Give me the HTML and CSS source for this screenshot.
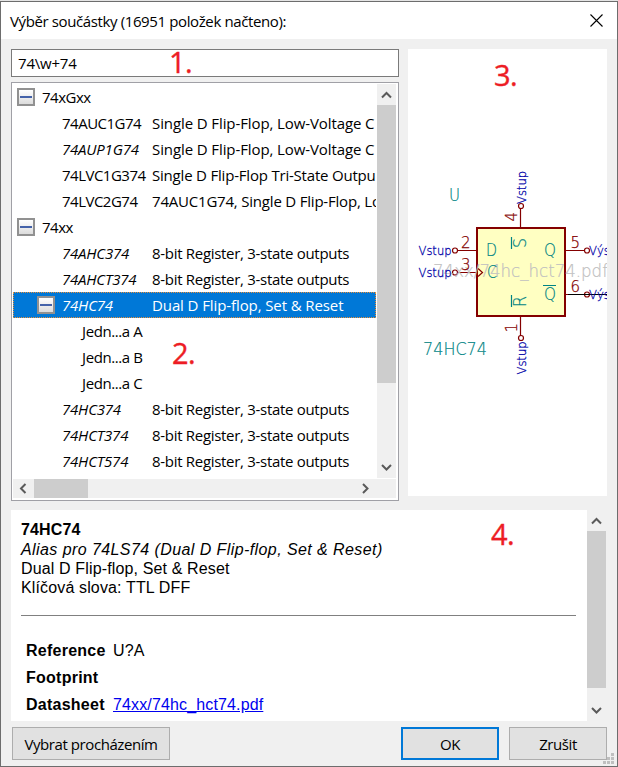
FILE: index.html
```html
<!DOCTYPE html>
<html lang="cs">
<head>
<meta charset="utf-8">
<title>Výběr součástky</title>
<link rel="stylesheet" href="styles.css">
</head>
<body>
<div class="window">
  <header class="titlebar">
    <span class="title">Výběr součástky (16951 položek načteno):</span>
    <svg class="close" width="13" height="13" viewBox="0 0 13 13"><path d="M.5 .5l12 12M12.5 .5l-12 12"/></svg>
  </header>
  <main class="content">
    <div class="upper">
      <div class="left">
        <div class="search">74\w+74</div>
        <div class="tree">
          <div class="tree-main">
            <div class="rows">
              <div class="row group"><i class="toggle"></i><span>74xGxx</span></div>
              <div class="row part"><span class="name">74AUC1G74</span><span class="desc loose">Single D Flip-Flop, Low-Voltage C</span></div>
              <div class="row part alias"><span class="name">74AUP1G74</span><span class="desc loose">Single D Flip-Flop, Low-Voltage C</span></div>
              <div class="row part"><span class="name">74LVC1G374</span><span class="desc medium">Single D Flip-Flop Tri-State Outpu</span></div>
              <div class="row part"><span class="name">74LVC2G74</span><span class="desc medium">74AUC1G74, Single D Flip-Flop, Lo</span></div>
              <div class="row group"><i class="toggle"></i><span>74xx</span></div>
              <div class="row part alias"><span class="name">74AHC374</span><span class="desc">8-bit Register, 3-state outputs</span></div>
              <div class="row part alias"><span class="name">74AHCT374</span><span class="desc">8-bit Register, 3-state outputs</span></div>
              <div class="row part alias selected"><i class="toggle"></i><span class="name">74HC74</span><span class="desc loose">Dual D Flip-flop, Set &amp; Reset</span></div>
              <div class="row unit">Jedn...a A</div>
              <div class="row unit">Jedn...a B</div>
              <div class="row unit">Jedn...a C</div>
              <div class="row part alias"><span class="name">74HC374</span><span class="desc">8-bit Register, 3-state outputs</span></div>
              <div class="row part alias"><span class="name">74HCT374</span><span class="desc">8-bit Register, 3-state outputs</span></div>
              <div class="row part alias"><span class="name">74HCT574</span><span class="desc">8-bit Register, 3-state outputs</span></div>
            </div>
            <div class="vscroll">
              <svg class="arrow" width="19" height="21"><path d="M5 13.5l4.5-4.5 4.5 4.5"/></svg>
              <div class="thumb tree-thumb"></div>
              <svg class="arrow last" width="19" height="21"><path d="M5 8l4.5 4.5L14 8"/></svg>
            </div>
          </div>
          <div class="hscroll">
            <svg class="arrow" width="21" height="19"><path d="M12.5 5L8 9.500l4.500 4.500"/></svg>
            <div class="hthumb"></div>
            <svg class="arrow right" width="21" height="19"><path d="M8 5l4.500 4.500L8 14"/></svg>
          </div>
        </div>
      </div>
      <div class="preview">
        <svg width="199" height="447" viewBox="408 49 199 447">
          <rect class="body" x="477" y="228" width="88" height="88"/>
          <g class="pin">
            <path d="M457 250.500H476M457 272.500H476M566 250.500H585M566 294.500H585M520.500 208V227M520.500 317V336M478 268.500l4.500 4-4.500 4"/>
            <circle cx="455" cy="250.500" r="2.500"/><circle cx="455" cy="272.500" r="2.500"/>
            <circle cx="587" cy="250.500" r="2.500"/><circle cx="587" cy="294.500" r="2.500"/>
            <circle cx="521" cy="206" r="2.500"/><circle cx="521" cy="338" r="2.500"/>
          </g>
          <path class="wire" d="M568 294.500H607"/>
          <g class="faint"><text x="433" y="277" textLength="175" lengthAdjust="spacingAndGlyphs">74xx/74hc_hct74.pdf</text></g>
          <g class="num">
            <text x="461" y="248">2</text><text x="461" y="270">3</text>
            <text x="570.500" y="248">5</text><text x="570.500" y="292">6</text>
            <text transform="translate(517 221.500) rotate(-90)">4</text>
            <text transform="translate(517 332.500) rotate(-90)">1</text>
          </g>
          <g class="teal">
            <text x="486" y="256" textLength="11" lengthAdjust="spacingAndGlyphs">D</text>
            <text x="487" y="278" textLength="10" lengthAdjust="spacingAndGlyphs">C</text>
            <text x="544" y="256" textLength="12" lengthAdjust="spacingAndGlyphs">Q</text>
            <text x="544" y="300" textLength="12" lengthAdjust="spacingAndGlyphs">Q</text>
            <text transform="translate(526 248) rotate(-90)" textLength="10" lengthAdjust="spacingAndGlyphs">S</text>
            <text transform="translate(526 307) rotate(-90)" textLength="11" lengthAdjust="spacingAndGlyphs">R</text>
            <text x="449" y="201" textLength="11" lengthAdjust="spacingAndGlyphs">U</text>
            <text x="423" y="355" textLength="64" lengthAdjust="spacingAndGlyphs">74HC74</text>
            <path d="M511.500 237V249M511.500 295V307M543 285.500H556"/>
          </g>
          <g class="label">
            <text x="418.500" y="255" textLength="33" lengthAdjust="spacingAndGlyphs">Vstup</text>
            <text x="418.500" y="277" textLength="33" lengthAdjust="spacingAndGlyphs">Vstup</text>
            <text x="589" y="255" textLength="40" lengthAdjust="spacingAndGlyphs">Výstup</text>
            <text x="589" y="299" textLength="40" lengthAdjust="spacingAndGlyphs">Výstup</text>
            <text transform="translate(525.500 204) rotate(-90)" textLength="33" lengthAdjust="spacingAndGlyphs">Vstup</text>
            <text transform="translate(525.500 374.500) rotate(-90)" textLength="33" lengthAdjust="spacingAndGlyphs">Vstup</text>
          </g>
        </svg>
      </div>
    </div>
    <div class="details">
      <div class="info">
        <div class="info-name">74HC74</div>
        <div class="info-alias">Alias pro 74LS74 (Dual D Flip-flop, Set &amp; Reset)</div>
        <div class="info-desc">Dual D Flip-flop, Set &amp; Reset</div>
        <div class="info-keys">Klíčová slova: TTL DFF</div>
        <hr>
        <dl class="fields">
          <dt>Reference</dt><dd>U?A</dd>
          <dt>Footprint</dt><dd></dd>
          <dt>Datasheet</dt><dd><a href="#">74xx/74hc_hct74.pdf</a></dd>
        </dl>
      </div>
      <div class="vscroll">
        <svg class="arrow" width="19" height="21"><path d="M5 13.500l4.500-4.500 4.500 4.500"/></svg>
        <div class="thumb info-thumb"></div>
        <svg class="arrow last" width="19" height="21"><path d="M5 8l4.500 4.500L14 8"/></svg>
      </div>
    </div>
    <footer class="buttons">
      <button class="browse">Vybrat procházením</button>
      <button class="ok">OK</button>
      <button class="cancel">Zrušit</button>
    </footer>
  </main>
  <svg class="grip" width="11" height="11"><path d="M8 0h3v3H8zM4 4h3v3H4zM8 4h3v3H8zM0 8h3v3H0zM4 8h3v3H4zM8 8h3v3H8z"/></svg>
  <span class="mark mark1">1.</span>
  <span class="mark mark2">2.</span>
  <span class="mark mark3">3.</span>
  <span class="mark mark4">4.</span>
</div>
</body>
</html>
```
FILE: styles.css
```css
* { box-sizing: border-box; }
body {
  margin: 0;
  background: #e4e4e4;
  font: 15px/26px "Open Sans", sans-serif;
  letter-spacing: -0.5px;
  color: #000;
}
.window {
  position: relative;
  width: 618px;
  height: 766px;
  margin-top: 1px;
  border: 1px solid #6d6d6d;
  background: #f0f0f0;
  overflow: hidden;
  white-space: nowrap;
}
.titlebar {
  display: flex;
  justify-content: space-between;
  align-items: center;
  height: 37px;
  padding: 0 14px 0 9px;
  background: #fff;
}
.title { letter-spacing: -0.38px; }
.close path { stroke: #000; stroke-width: 1.1; fill: none; }
.content { padding: 10px 10px 0; }
.upper { display: flex; gap: 9px; height: 461px; }
.left { width: 388px; }
.search {
  height: 28px;
  padding-left: 6px;
  border: 1px solid #7a7a7a;
  background: #fff;
  letter-spacing: -0.2px;
}
.tree {
  height: 419px;
  margin-top: 5px;
  padding: 1px;
  border: 1px solid #a0a0a6;
  background: #fff;
}
.tree-main { display: flex; height: 395px; }
.rows { width: 363px; margin-right: 1px; height: 394px; overflow: hidden; }
.row { display: flex; align-items: center; height: 26px; }
.group { padding-left: 4px; }
.part { padding-left: 49px; }
.unit { padding-left: 69px; letter-spacing: -0.4px; }
.toggle {
  width: 18px;
  height: 18px;
  flex: none;
  margin-right: 7px;
  border: 2px solid #919191;
  background: linear-gradient(#4462a9, #4462a9) center / 12px 2px no-repeat, linear-gradient(#fff, #dcdcdc);
}
.name { width: 90px; flex: none; }
.alias .name { font-style: italic; letter-spacing: -0.2px; }
.desc { letter-spacing: -0.3px; }
.desc.medium { letter-spacing: -0.2px; }
.desc.loose { letter-spacing: -0.1px; }
.selected {
  padding-left: 23px;
  outline: 1px dotted #e8903a;
  outline-offset: -1px;
  background: #0078d7;
  color: #fff;
}
.selected .toggle { margin-left: 1px; }
.vscroll {
  display: flex;
  flex-direction: column;
  width: 19px;
  background: #f0f0f0;
}
.tree .vscroll { height: 394px; }
.arrow { display: block; flex: none; }
.arrow path { fill: none; stroke: #5a5a5a; stroke-width: 2; }
.last { margin-top: auto; }
.thumb, .hthumb { background: #cdcdcd; }
.tree-thumb { height: 278px; }
.info-thumb { height: 157px; }
.hscroll {
  display: flex;
  height: 19px;
  width: 383px;
  background: #f0f0f0;
}
.hthumb { width: 54px; }
.right { margin-left: auto; margin-right: 20px; }
.preview { width: 199px; height: 447px; background: #fff; overflow: hidden; }
.preview svg {
  display: block;
  font-family: "DejaVu Sans Light", "DejaVu Sans", sans-serif;
  font-weight: 200;
  letter-spacing: 0;
}
.body { fill: #ffffc2; stroke: #840000; stroke-width: 2; }
.pin { fill: none; stroke: #840000; stroke-width: 1.2; }
.wire { stroke: #000; stroke-width: 1.2; }
.num { fill: #840000; stroke: #840000; stroke-width: 0.25; font-size: 15px; }
.teal { fill: #008484; font-size: 17px; }
.teal text { stroke: #008484; stroke-width: 0.2; }
.teal path { stroke: #008484; stroke-width: 1.2; }
.label { fill: #0000a8; stroke: #0000a8; stroke-width: 0.3; font-size: 13px; }
.faint { fill: #c0c0c0; stroke: #c0c0c0; stroke-width: 0.2; font-size: 17px; }
.details { display: flex; height: 211px; width: 595px; }
.info {
  width: 576px;
  padding: 10px 11px 0 10px;
  background: #fff;
  font: 16px/19px "Liberation Sans", sans-serif;
  letter-spacing: 0.14px;
}
.info-name { font-weight: bold; line-height: 20px; }
.info-alias { font-style: italic; letter-spacing: 0.42px; }
hr { margin: 18px 0 0; border: 0; border-top: 1px solid #808080; }
.fields {
  display: grid;
  grid-template-columns: 87px auto;
  margin: 21px 0 0 5px;
  line-height: 27px;
}
dt { font-weight: bold; letter-spacing: 0.25px; }
dd { margin: 0; }
a { color: #0000ee; }
.buttons { display: flex; padding: 6px 0 0 1px; }
button {
  height: 33px;
  padding: 0;
  border: 1px solid #adadad;
  background: #e1e1e1;
  color: #000;
  font: inherit;
  letter-spacing: -0.42px;
}
.browse { width: 158px; margin-right: auto; }
.ok { width: 98px; margin-right: 10px; border: 2px solid #0078d7; }
.cancel { width: 98px; }
.grip { position: absolute; right: 3px; bottom: 2px; }
.grip path { fill: #bfbfbf; }
.mark {
  position: absolute;
  font-size: 29px;
  line-height: 30px;
  color: #ed1c24;
  -webkit-text-stroke: 0.4px #ed1c24;
}
.mark1 { left: 168px; top: 45px; }
.mark2 { left: 171px; top: 336px; }
.mark3 { left: 493px; top: 58px; }
.mark4 { left: 490px; top: 517px; }
```
